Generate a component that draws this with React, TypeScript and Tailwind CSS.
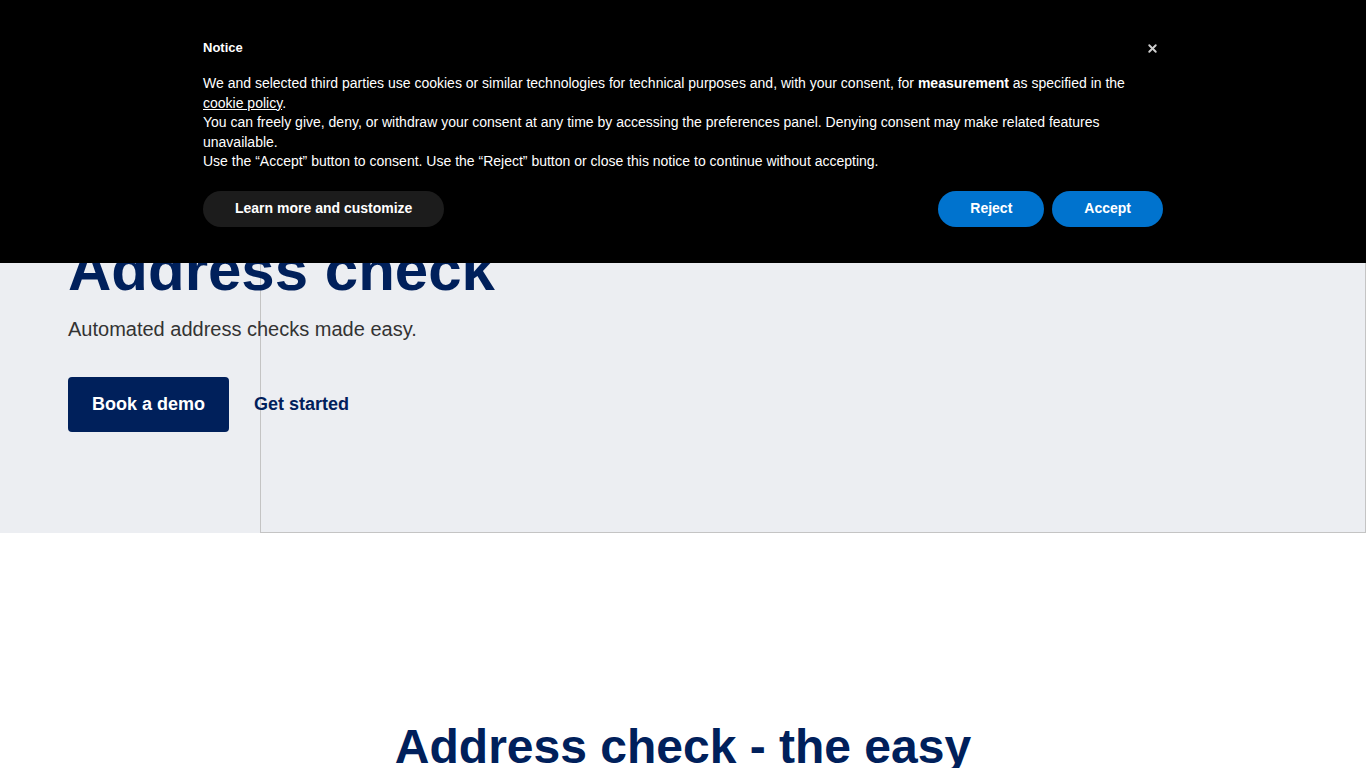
import { X } from "lucide-react";

const navy = "text-[#00205b]";

function CookieNotice() {
  return (
    <div className="fixed inset-x-0 top-0 z-50 bg-black text-white font-['Liberation_Sans',Arial,sans-serif]">
      <div className="relative mx-auto w-[960px] pt-[40px] pb-[36px]">
        <h2 className="text-[13px] leading-[16px] font-bold">Notice</h2>
        <button
          aria-label="Close"
          className="absolute right-[4px] top-[41px] flex h-[14px] w-[14px] items-center justify-center text-[#cfcfcf]"
        >
          <X size={13} strokeWidth={3.5} />
        </button>
        <div className="mt-[18px] text-[14px] leading-[19.6px]">
          <p>
            We and selected third parties use cookies or similar technologies for technical purposes and, with your
            consent, for <strong className="font-bold">measurement</strong> as specified in the{" "}
            <a className="underline">cookie policy</a>.
          </p>
          <p>
            You can freely give, deny, or withdraw your consent at any time by accessing the preferences panel. Denying
            consent may make related features unavailable.
          </p>
          <p>Use the “Accept” button to consent. Use the “Reject” button or close this notice to continue without accepting.</p>
        </div>
        <div className="mt-[19px] flex items-center justify-between">
          <button className="h-9 rounded-full bg-[#1c1c1c] px-8 text-[14px] font-bold">Learn more and customize</button>
          <div className="flex gap-2">
            <button className="h-9 rounded-full bg-[#0073ce] px-8 text-[14px] font-bold">Reject</button>
            <button className="h-9 rounded-full bg-[#0073ce] px-8 text-[14px] font-bold">Accept</button>
          </div>
        </div>
      </div>
    </div>
  );
}

export default function App() {
  return (
    <div className="min-h-screen bg-white font-['Liberation_Sans',Arial,sans-serif]">
      <CookieNotice />

      {/* Hero */}
      <section className="relative h-[533px] overflow-hidden bg-[#eceef2]">
        {/* image placeholder */}
        <div className="absolute left-[260px] right-0 top-[90px] bottom-0 border border-[#c4c4c4]" />
        <div className="relative px-[68px] pt-[237px]">
          <h1 className={`text-[60px] leading-[66px] font-bold ${navy}`}>Address check</h1>
          <p className="mt-[12px] text-[20px] leading-[28px] text-[#333333]">Automated address checks made easy.</p>
          <div className="mt-[34px] flex items-center gap-[25px]">
            <a className="flex h-[55px] items-center rounded-[4px] bg-[#00205b] px-6 text-[18px] font-bold text-white">
              Book a demo
            </a>
            <a className={`text-[18px] font-bold ${navy}`}>Get started</a>
          </div>
        </div>
      </section>

      {/* Intro */}
      <section className="pt-[185px] pb-20 text-center">
        <h2 className={`mx-auto max-w-[620px] text-[48px] leading-[57.6px] font-bold ${navy}`}>
          Address check - the easy way
        </h2>
      </section>
    </div>
  );
}
